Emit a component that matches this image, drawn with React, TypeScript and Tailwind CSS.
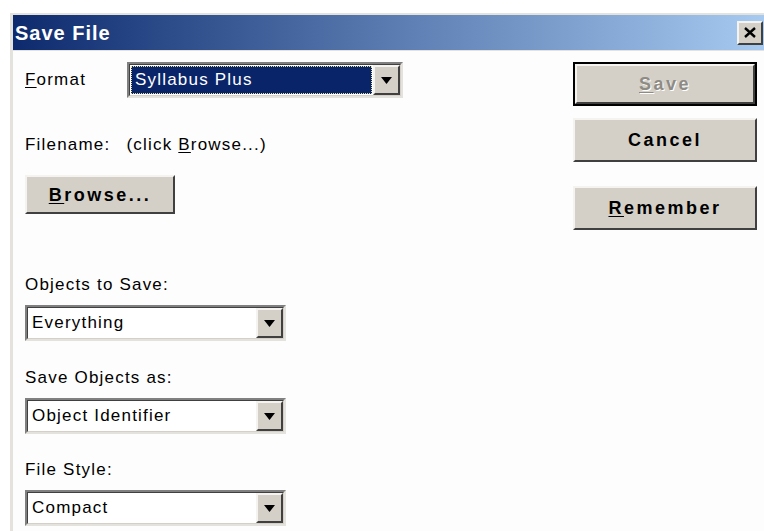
import type { ReactNode } from "react";

const font = { fontFamily: '"Liberation Sans", Arial, sans-serif' };

function Combo({ value, focused }: { value: string; focused?: boolean }) {
  return (
    <div className="flex h-[36px] w-full border-2 border-t-[#808080] border-l-[#808080] border-b-[#e4e2dc] border-r-[#e4e2dc]">
      <div className="flex flex-1 border border-t-[#404040] border-l-[#404040] border-b-[#d4d0c8] border-r-[#d4d0c8] bg-white">
        <div className="flex flex-1 items-center p-[1px]">
          {focused ? (
            <div className="flex h-full flex-1 items-center border border-dotted border-[#e8e090] bg-[#0a246a] pl-[3px] text-white">
              {value}
            </div>
          ) : (
            <div className="flex h-full flex-1 items-center pl-[3px] text-black">{value}</div>
          )}
        </div>
        <div className="flex w-[27px] items-center justify-center border-2 border-t-[#f4f3ef] border-l-[#f4f3ef] border-b-[#404040] border-r-[#404040] bg-[#d4d0c8]">
          <svg width="11" height="7" viewBox="0 0 11 7">
            <path d="M0 0 H11 L5.5 7 Z" fill="#000" />
          </svg>
        </div>
      </div>
    </div>
  );
}

function Button({ children, def, disabled, h = "h-[44px]" }: { children: ReactNode; def?: boolean; disabled?: boolean; h?: string }) {
  return (
    <div className={def ? "border-2 border-black" : ""}>
      <div
        className={
          "flex items-center justify-center bg-[#d4d0c8] border-2 border-t-[#f4f3ef] border-l-[#f4f3ef] border-b-[#404040] border-r-[#404040] text-[18px] font-bold tracking-[2.5px] " +
          (def ? "h-[40px] " : h + " ") +
          (disabled ? "text-[#8e8b85] [text-shadow:1px_1px_0_#ffffff]" : "text-black")
        }
      >
        {children}
      </div>
    </div>
  );
}

export default function App() {
  return (
    <div className="h-[531px] w-[764px] overflow-hidden bg-white pl-[10px] pt-[13px]" style={font}>
      <div className="h-full border-l-[3px] border-t-[2px] border-[#e4e2dc] bg-[#fdfdfd]">
        {/* caption */}
        <div className="flex h-[35px] items-center justify-between bg-gradient-to-r from-[#0e2a6e] via-[#5a7bb0] to-[#a6caf0] pl-[2px] pr-[1px]">
          <span className="text-[20px] font-bold tracking-[1px] text-white">Save File</span>
          <div className="flex h-[24px] w-[26px] items-center justify-center border-2 border-t-[#f4f3ef] border-l-[#f4f3ef] border-b-[#404040] border-r-[#404040] bg-[#d4d0c8]">
            <svg width="12" height="11" viewBox="0 0 12 11">
              <path d="M1 1 L11 10 M11 1 L1 10" stroke="#000" strokeWidth="2.4" />
            </svg>
          </div>
        </div>
        <div className="h-[1px] bg-[#e4e2dc]" />

        <div className="flex text-[17px] leading-[20px] tracking-[1.2px] text-black">
          <div className="flex-1 pl-[12px] pt-[11px]">
            <div className="flex items-center">
              <span className="w-[102px]">
                <span className="underline underline-offset-2">F</span>ormat
              </span>
              <div className="w-[276px]">
                <Combo value="Syllabus Plus" focused />
              </div>
            </div>

            <div className="mt-[37px] flex">
              <span>Filename:</span>
              <span className="ml-[16px]">
                (click <span className="underline underline-offset-2">B</span>rowse...)
              </span>
            </div>

            <div className="mt-[20px] w-[150px]">
              <Button h="h-[39px]">
                <span className="underline underline-offset-2">B</span>rowse...
              </Button>
            </div>

            <div className="mt-[61px]">Objects to Save:</div>
            <div className="mt-[10px] w-[261px]">
              <Combo value="Everything" />
            </div>

            <div className="mt-[27px]">Save Objects as:</div>
            <div className="mt-[10px] w-[261px]">
              <Combo value="Object Identifier" />
            </div>

            <div className="mt-[26px]">File Style:</div>
            <div className="mt-[10px] w-[261px]">
              <Combo value="Compact" />
            </div>
          </div>

          <div className="mr-[7px] flex w-[184px] flex-col pt-[11px]">
            <Button def disabled>
              <span className="underline underline-offset-2">S</span>ave
            </Button>
            <div className="mt-[12px]">
              <Button>Cancel</Button>
            </div>
            <div className="mt-[24px]">
              <Button>
                <span className="underline underline-offset-2">R</span>emember
              </Button>
            </div>
          </div>
        </div>
      </div>
    </div>
  );
}
